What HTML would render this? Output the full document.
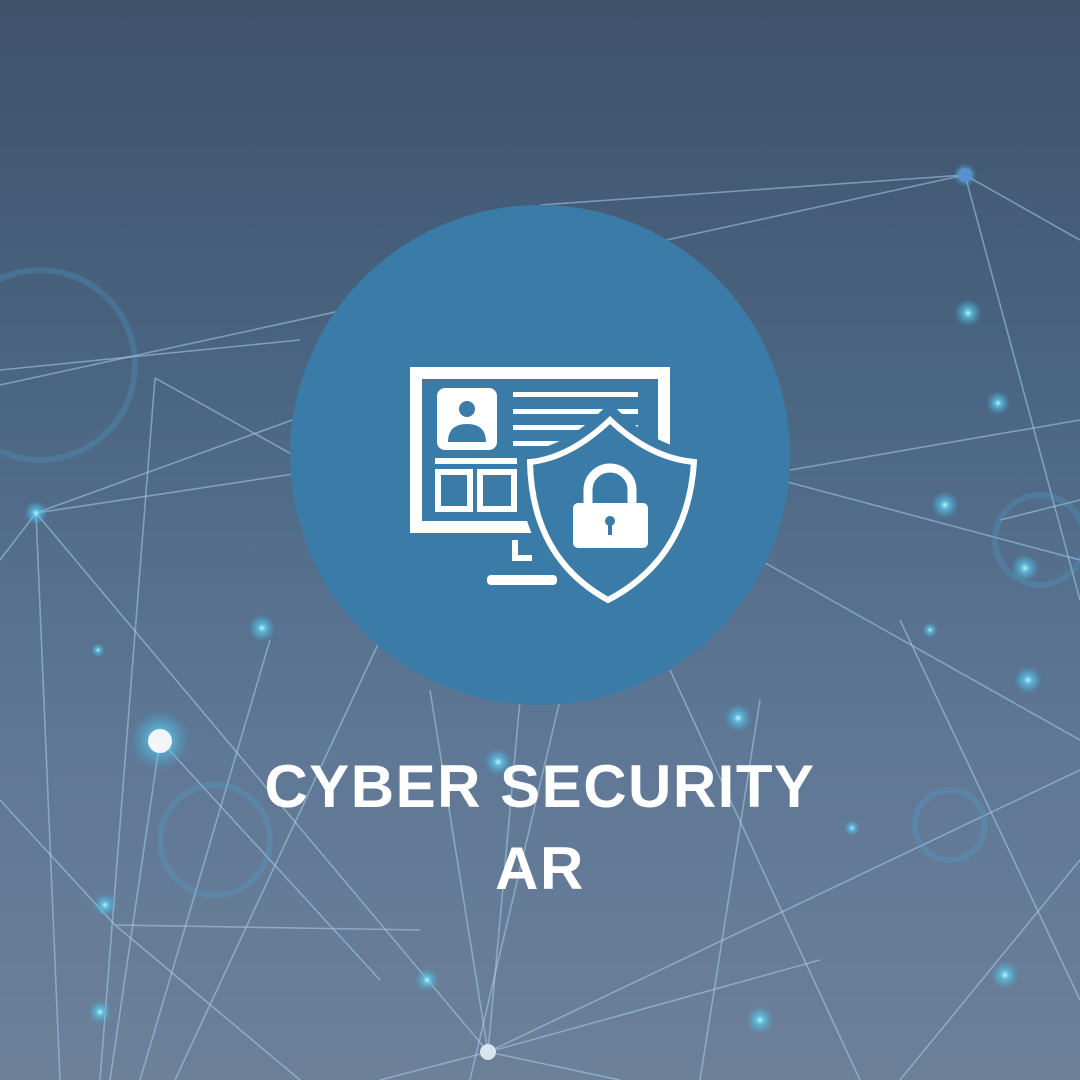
<!DOCTYPE html>
<html><head><meta charset="utf-8"><style>
html,body{margin:0;padding:0}
body{width:1080px;height:1080px;overflow:hidden;position:relative;background:linear-gradient(180deg,#3e526a 0%,#4a6582 35%,#5f7896 70%,#6c8098 100%);font-family:"Liberation Sans",sans-serif}
svg{position:absolute;left:0;top:0}
.t{position:absolute;left:0;width:1080px;text-align:center;color:#fff;font-weight:bold;font-size:60px;letter-spacing:1.5px}
</style></head><body>
<svg width="1080" height="1080" viewBox="0 0 1080 1080">
<defs>
<radialGradient id="g"><stop offset="0" stop-color="#bff4ff" stop-opacity="1"/><stop offset="0.3" stop-color="#5fd0f0" stop-opacity=".7"/><stop offset="1" stop-color="#3fb0e0" stop-opacity="0"/></radialGradient>
</defs>
<g stroke="#a9cde6" stroke-opacity=".55" stroke-width="1.6" fill="none">
<path d="M0 385 L965 175 L1080 240"/>
<path d="M540 205 L965 175 L1080 600"/>
<path d="M36 513 L540 330 M36 513 L320 470"/>
<path d="M36 513 L0 560 M36 513 L60 1080 M36 513 L488 1052"/>
<path d="M155 378 L100 1080 M155 378 L320 470 M0 370 L300 340"/>
<path d="M160 740 L110 1080 M160 740 L380 980"/>
<path d="M0 800 L115 925 L300 1080 M115 925 L420 930"/>
<path d="M270 640 L140 1080 M380 640 L175 1080"/>
<path d="M430 690 L488 1052 L620 1080 M520 700 L488 1052 L380 1080"/>
<path d="M488 1052 L1080 770 M488 1052 L820 960"/>
<path d="M670 670 L860 1080 M760 560 L1080 740 M780 480 L1080 560"/>
<path d="M790 470 L1080 420 M760 700 L700 1080 M1080 860 L900 1080"/>
<path d="M560 700 L470 1080 M1000 520 L1080 500 M900 620 L1080 1000"/>
</g>
<g fill="none" stroke="#4aa8d8" stroke-opacity=".25" stroke-width="6">
<circle cx="40" cy="365" r="95"/>
<circle cx="215" cy="840" r="55"/>
<circle cx="950" cy="825" r="35"/>
<circle cx="1040" cy="540" r="45"/>
</g>
<g fill="url(#g)">
<circle cx="160" cy="740" r="30"/><circle cx="36" cy="513" r="12"/><circle cx="965" cy="175" r="12"/>
<circle cx="968" cy="313" r="14"/><circle cx="998" cy="403" r="12"/><circle cx="945" cy="505" r="14"/>
<circle cx="1025" cy="568" r="14"/><circle cx="1028" cy="680" r="14"/><circle cx="262" cy="628" r="14"/>
<circle cx="105" cy="905" r="12"/><circle cx="738" cy="718" r="14"/><circle cx="498" cy="762" r="14"/>
<circle cx="1005" cy="975" r="14"/><circle cx="760" cy="1020" r="14"/><circle cx="100" cy="1012" r="12"/>
<circle cx="427" cy="980" r="12"/><circle cx="852" cy="828" r="8"/><circle cx="98" cy="650" r="7"/><circle cx="930" cy="630" r="8"/>
</g>
<circle cx="160" cy="741" r="12" fill="#f2f6fa"/>
<circle cx="488" cy="1052" r="8" fill="#d8e4ee"/>
<circle cx="965" cy="175" r="7" fill="#5a90d0"/>
<circle cx="540" cy="455" r="250" fill="#3b7ba8"/>
<g fill="#fff">
<path fill-rule="evenodd" d="M410 367h260v166h-260z M422 379v142h236v-142z"/>
<rect x="437" y="388" width="60" height="62" rx="8"/>
<rect x="513" y="392" width="125" height="5"/>
<rect x="513" y="409" width="125" height="5"/>
<rect x="513" y="425" width="125" height="5"/>
<rect x="513" y="441" width="100" height="5"/>
<rect x="435" y="458" width="82" height="6"/>
<path fill-rule="evenodd" d="M435 469h38v43h-38z M441 475v31h26v-31z"/>
<path fill-rule="evenodd" d="M477 469h40v43h-40z M483 475v31h28v-31z"/>
<rect x="512" y="540" width="6" height="20"/>
<rect x="512" y="555" width="20" height="6"/>
<rect x="487" y="575" width="70" height="10" rx="4"/>
</g>
<g fill="#3b7ba8">
<circle cx="467" cy="409" r="8"/>
<path d="M448 442 q0-18 19-18 q19 0 19 18 z"/>
</g>
<path d="M610 415 Q570 455 527 460 Q528 560 608 603 Q690 560 697 460 Q650 455 610 415Z" fill="#3b7ba8" stroke="#3b7ba8" stroke-width="18"/>
<path d="M610 420 Q570 458 530 462 Q532 558 608 600 Q688 558 694 462 Q650 458 610 420Z" fill="none" stroke="#fff" stroke-width="6"/>
<path d="M588 505 v-15 a22 22 0 0 1 44 0 v15" fill="none" stroke="#fff" stroke-width="9"/>
<rect x="573" y="503" width="75" height="45" rx="5" fill="#fff"/>
<circle cx="610" cy="521" r="5" fill="#3b7ba8"/><rect x="608" y="521" width="4" height="14" fill="#3b7ba8"/>
</svg>
<div class="t" style="top:752px">CYBER SECURITY</div>
<div class="t" style="top:834px">AR</div>
</body></html>
